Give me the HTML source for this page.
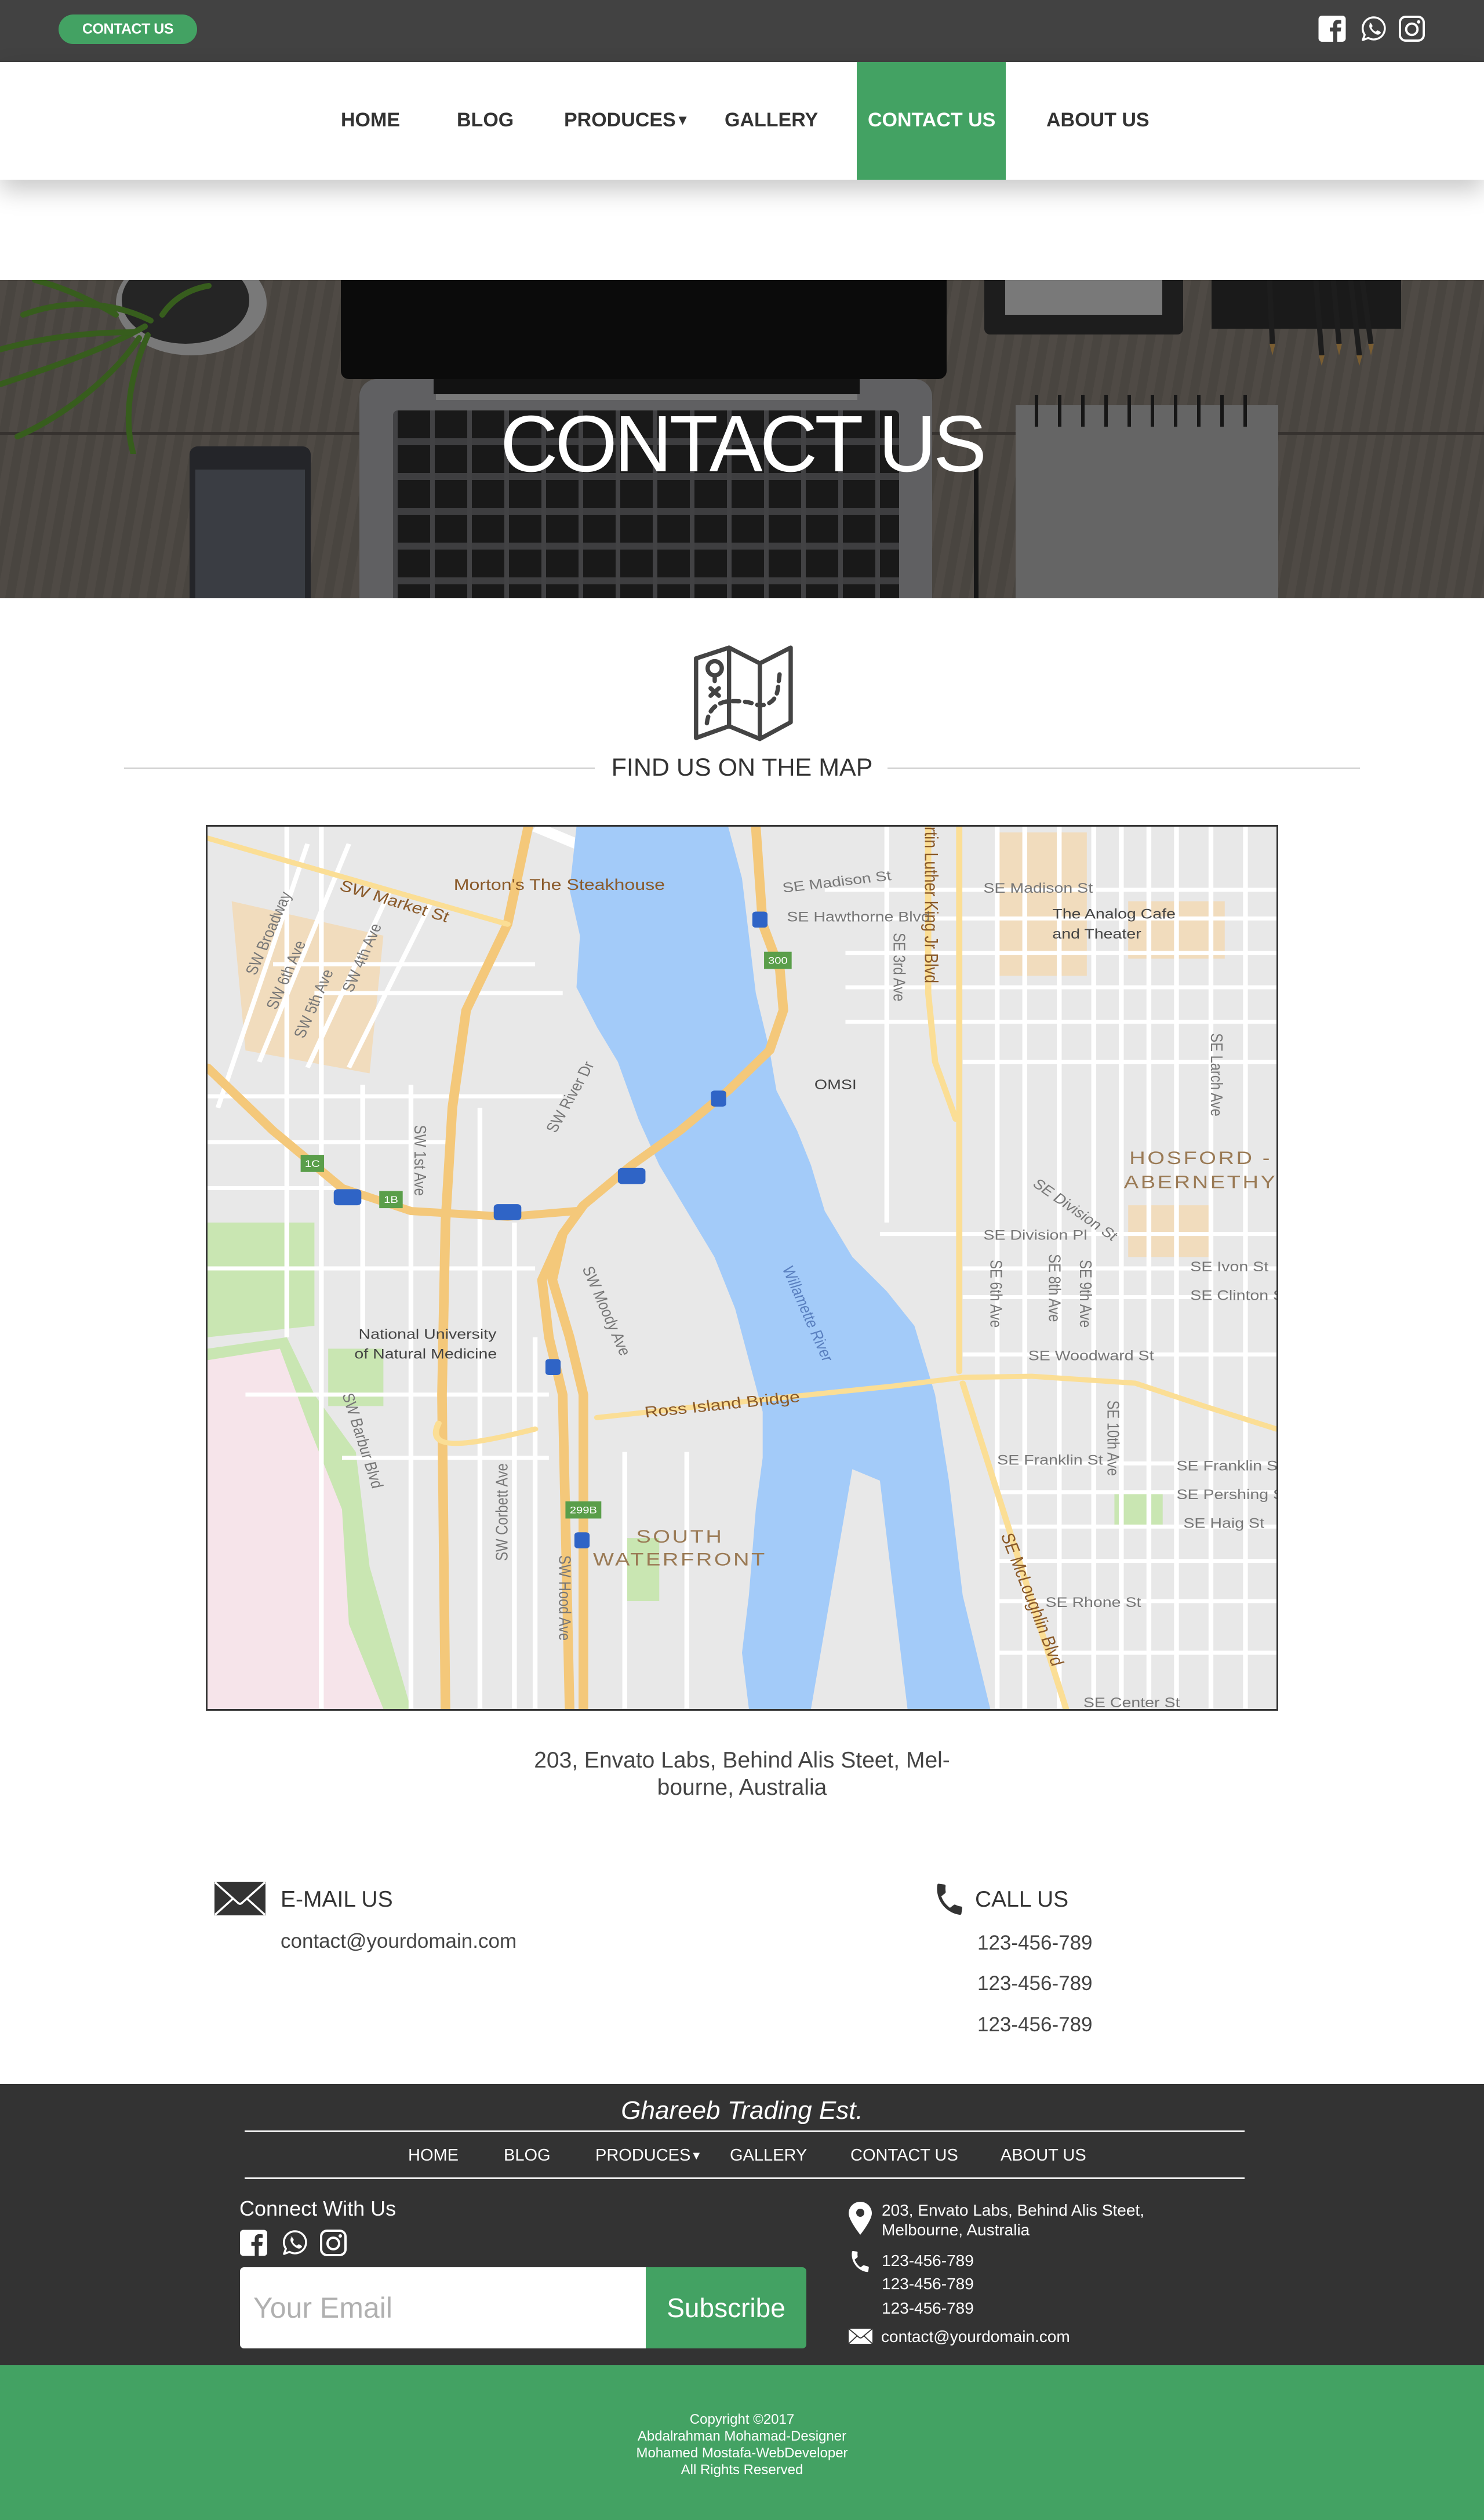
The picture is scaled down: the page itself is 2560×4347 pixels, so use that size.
<!DOCTYPE html>
<html><head><meta charset="utf-8">
<style>
*{margin:0;padding:0;box-sizing:border-box}
html,body{width:2560px;height:4347px;background:#fff;overflow:hidden;font-family:"Liberation Sans",sans-serif;color:#333}
.a{position:absolute;white-space:nowrap}
</style></head><body>

<!-- top bar -->
<div class="a" style="left:0;top:0;width:2560px;height:107px;background:#424242"></div>
<div class="a" style="left:101px;top:25px;width:239px;height:51px;border-radius:26px;background:#43a263;color:#fff;font-size:25px;font-weight:bold;line-height:51px;text-align:center;letter-spacing:-0.5px">CONTACT US</div>
<svg class="a" style="left:2274px;top:27px" width="48" height="45" viewBox="0 0 48 46"><rect width="48" height="46" rx="6" fill="#fff"/><path d="M33 46V28h6l1-7h-7v-4c0-2 1-3 3-3h4V8c-2-.4-4-.5-6-.5-5.5 0-8 3.5-8 8.5v5h-6v7h6v18z" fill="#424242"/></svg>
<svg class="a" style="left:2347px;top:27px" width="46" height="46" viewBox="0 0 46 46"><path d="M23 3a19 19 0 1 1-9.5 35.5L4 42l3.2-9A19 19 0 0 1 23 3z" fill="none" stroke="#fff" stroke-width="3.5" stroke-linejoin="round"/><path d="M15 13c1-1 2-1 3 0l2.5 4c.5 1 0 2-1 2.7-.5.4-.5 1 0 2 1.5 2.5 3 4 5.5 5.5 1 .5 1.6.5 2-0l1-1c.7-.8 1.700-1 2.6-.5l3.6 2.3c1 .7 1 1.7 0 2.8-2 2.2-4.5 2.5-7.3 1.3-5-2.2-9-6.3-11.2-11.2-1-2.5-.8-5.8 1.3-7.4z" fill="#fff"/></svg>
<svg class="a" style="left:2413px;top:27px" width="45" height="45" viewBox="0 0 46 46"><rect x="2" y="2" width="42" height="42" rx="10" fill="none" stroke="#fff" stroke-width="4"/><circle cx="23" cy="24" r="10" fill="none" stroke="#fff" stroke-width="4"/><circle cx="35" cy="11" r="3" fill="#fff"/></svg>

<!-- nav -->
<div class="a" style="left:0;top:107px;width:2560px;height:203px;background:#fff;box-shadow:0 18px 40px rgba(0,0,0,.22)"></div>
<div class="a" style="left:1478px;top:107px;width:257px;height:203px;background:#43a263"></div>
<div class="a" style="left:0;top:185px;width:2560px;height:44px;font-size:34px;font-weight:bold;line-height:44px;color:#333">
 <span class="a" style="left:588px">HOME</span>
 <span class="a" style="left:788px">BLOG</span>
 <span class="a" style="left:973px">PRODUCES<span style="font-size:24px;position:relative;top:-3px">▼</span></span>
 <span class="a" style="left:1250px">GALLERY</span>
 <span class="a" style="left:1497px;color:#fff">CONTACT US</span>
 <span class="a" style="left:1805px">ABOUT US</span>
</div>

<!-- hero -->
<div class="a" style="left:0;top:483px;width:2560px;height:549px;overflow:hidden;background:repeating-linear-gradient(100deg,#5a554f 0 14px,#544f49 14px 30px)">
 <div class="a" style="left:0;top:262px;width:2560px;height:5px;background:#3e3a36"></div>
 <svg class="a" style="left:0;top:0" width="560" height="300" viewBox="0 0 560 300"><ellipse cx="330" cy="40" rx="130" ry="90" fill="#8a8a8a"/><ellipse cx="320" cy="35" rx="110" ry="75" fill="#2b2b2b"/><g stroke="#3f6a22" stroke-width="10" fill="none" stroke-linecap="round"><path d="M250 80 C180 120 90 150 0 180"/><path d="M260 70 C200 40 120 30 40 60"/><path d="M240 100 C200 160 120 230 30 270"/><path d="M280 60 C300 30 330 15 360 10"/><path d="M230 90 C150 90 70 100 0 120"/><path d="M255 95 C230 150 210 230 230 300"/><path d="M200 60 C150 30 100 10 60 0"/></g></svg>
 <div class="a" style="left:588px;top:0;width:1045px;height:171px;background:#0d0d0d;border-radius:0 0 14px 14px"></div>
 <div class="a" style="left:620px;top:171px;width:988px;height:400px;background:#6e6e70;border-radius:30px 30px 0 0"></div>
 <div class="a" style="left:748px;top:171px;width:735px;height:26px;background:#151515"></div>
 <div class="a" style="left:752px;top:197px;width:727px;height:10px;background:#8a8a8a"></div>
 <div class="a" style="left:678px;top:225px;width:873px;height:340px;background:#4c4c4e;border-radius:8px;
   background-image:repeating-linear-gradient(90deg,transparent 0 8px,#1c1c1d 8px 64px),repeating-linear-gradient(0deg,#4c4c4e 0 10px,transparent 10px 60px)"></div>
 <div class="a" style="left:678px;top:225px;width:873px;height:340px;background:repeating-linear-gradient(180deg,#1d1d1e 0 48px,#4c4c4e 48px 60px);mix-blend-mode:lighten;opacity:.9"></div>
 <div class="a" style="left:327px;top:287px;width:209px;height:300px;background:#2a2b2f;border-radius:14px"></div>
 <div class="a" style="left:337px;top:327px;width:189px;height:260px;background:#43464d"></div>
 <div class="a" style="left:1752px;top:216px;width:453px;height:340px;background:#747474"></div>
 <div class="a" style="left:1785px;top:198px;width:390px;height:55px;background:repeating-linear-gradient(90deg,#1a1a1a 0 6px,transparent 6px 40px)"></div>
 <div class="a" style="left:1680px;top:310px;width:8px;height:240px;background:#1a1a1a"></div>
 <div class="a" style="left:1698px;top:0;width:343px;height:94px;background:#222;border-radius:0 0 10px 10px"></div>
 <div class="a" style="left:1734px;top:0;width:271px;height:60px;background:#8a8a8a"></div>
 <div class="a" style="left:2090px;top:0;width:327px;height:84px;background:#1e1e1e"></div>
 <svg class="a" style="left:2150px;top:0" width="300" height="150" viewBox="0 0 300 150"><g stroke="#222" stroke-width="9"><path d="M40 0 L45 110"/><path d="M120 0 L130 130"/><path d="M150 0 L160 110"/><path d="M180 0 L195 130"/><path d="M200 0 L215 110"/></g><g fill="#8a6a3a"><path d="M40 110 l5 20 5-20z"/><path d="M125 130 l5 18 5-18z"/><path d="M155 110 l5 20 5-20z"/><path d="M190 130 l5 18 5-18z"/><path d="M210 110 l5 20 5-20z"/></g></svg>
 <div class="a" style="left:0;top:0;width:2560px;height:549px;background:rgba(0,0,0,.12)"></div>
 <div class="a" style="left:0;top:213px;width:2560px;text-align:center;font-size:138px;line-height:140px;color:#fff;letter-spacing:-5px">CONTACT US</div>
</div>

<!-- map icon -->
<svg class="a" style="left:1150px;top:1090px" width="260" height="200" viewBox="0 0 768 590"><g fill="none" stroke="#444" stroke-width="22" stroke-linejoin="round" stroke-linecap="round"><path d="M150 135 L318 80 L475 160 L632 80 L632 460 L475 545 L318 480 L150 540 Z"/><path d="M318 80 L318 480 M475 160 L475 545"/><circle cx="245" cy="185" r="36"/><path d="M245 225 L245 250 M224 287 L266 325 M266 287 L224 325"/><path d="M205 465 Q215 375 300 355 Q400 345 470 375 Q560 372 568 280 L578 195" stroke-dasharray="34 30"/></g></svg>
<div class="a" style="left:214px;top:1324px;width:812px;height:2px;background:#ccc"></div>
<div class="a" style="left:1531px;top:1324px;width:815px;height:2px;background:#ccc"></div>
<div class="a" style="left:1030px;top:1299px;width:500px;text-align:center;font-size:43px;line-height:50px;color:#333">FIND US ON THE MAP</div>

<!-- map -->
<svg class="a" style="left:355px;top:1423px;border:3px solid #333" width="1850" height="1528" viewBox="5 10 1550 1538" preserveAspectRatio="none" font-family="Liberation Sans, sans-serif">
<rect x="0" y="0" width="1600" height="1600" fill="#e8e8e8"/>
<path d="M5 920 L120 900 L160 1000 L220 1100 L240 1300 L300 1548 L5 1548Z" fill="#c9e6b2"/>
<path d="M5 940 L110 920 L150 1050 L200 1200 L210 1400 L260 1548 L5 1548Z" fill="#f6e4ea"/>
<path d="M5 700 L160 700 L160 880 L5 900Z" fill="#c9e6b2"/>
<path d="M180 920 L260 920 L260 1020 L180 1020Z" fill="#c9e6b2"/>
<path d="M1320 1170 L1390 1170 L1390 1230 L1320 1230Z" fill="#c9e6b2"/>
<path d="M610 1250 L660 1250 L660 1360 L610 1360Z" fill="#c9e6b2"/>
<path d="M40 140 L260 200 L240 440 L60 400Z" fill="#f1dcbd"/>
<path d="M1150 20 L1280 20 L1280 270 L1150 270Z M1340 140 L1480 140 L1480 240 L1340 240Z M1340 670 L1460 670 L1460 760 L1340 760Z" fill="#f1dcbd"/>
<g stroke="#fff" stroke-width="7" fill="none">
<path d="M900 120H1555 M900 170H1555 M930 230H1555 M930 290H1555 M930 350H1555 M1100 420H1555 M980 720H1555 M1100 780H1555 M1100 830H1555 M1100 930H1555 M1150 1120H1555 M1150 1170H1555 M1150 1230H1555 M1150 1290H1555 M1150 1360H1555 M1150 1450H1555"/>
<path d="M1150 10V1548 M1190 10V1548 M1240 10V1548 M1290 10V1548 M1330 10V1548 M1370 10V1548 M1410 10V1548 M1460 10V1548 M1510 10V1548 M990 10V700"/>
<path d="M5 560H360 M5 640H200 M5 780H480 M60 1000H500 M200 1110H500 M5 480H520 M160 300H520 M100 250H480"/>
<path d="M120 10V900 M170 10V1548 M230 460V900 M300 460V1548 M400 500V1548 M450 700V1548 M480 900V1548 M610 1100V1548 M700 1100V1548"/>
<path d="M20 500 L150 40 M80 420 L210 40 M150 430 L270 120 M210 430 L330 140"/>
<path d="M480 10 L780 160" stroke-width="18"/>
</g>
<path d="M540 10 L760 10 L780 100 L790 200 L800 300 L820 400 L830 470 L860 540 L880 600 L900 680 L940 760 L990 820 L1030 880 L1060 1000 L1080 1150 L1100 1350 L1140 1548 L1020 1548 L1000 1350 L980 1150 L940 1130 L880 1548 L790 1548 L780 1450 L790 1350 L800 1200 L810 1110 L810 1030 L790 940 L770 850 L740 760 L700 680 L660 600 L630 520 L600 420 L570 360 L540 290 L545 200 L530 120 Z" fill="#a3cbf9"/>
<g fill="none" stroke-linecap="round" stroke-linejoin="round">
<g stroke="#f4c87a" stroke-width="14">
<path d="M800 10 L810 180 L835 260 L840 330 L820 400 L760 470 L690 540 L620 600 L550 670 L520 720 L505 800 L530 900 L550 1000 L550 1548"/>
<path d="M5 430 L100 540 L200 640 L300 680 L440 690 L540 680"/>
<path d="M520 720 L490 800 L500 900 L520 1000 L530 1548"/>
<path d="M470 10 L440 180 L380 330 L360 500 L350 700 L345 1000 L350 1548"/>
</g>
<g stroke="#fbde95" stroke-width="9">
<path d="M570 1040 L800 1010 L1000 985 L1100 970 L1200 968 L1350 980 L1450 1020 L1555 1060"/>
<path d="M1095 10 V960 M1100 980 L1250 1548"/>
<path d="M1050 10 V300 L1060 420 L1090 520"/>
<path d="M5 30 L440 180 M340 1050 C320 1100 380 1090 480 1060"/>
</g>
</g>
<g fill="#5a9e4a"><rect x="140" y="582" width="34" height="30"/><rect x="254" y="645" width="34" height="30"/><rect x="812" y="228" width="40" height="30"/><rect x="524" y="1186" width="52" height="30"/></g>
<g fill="#fff" font-size="17" text-anchor="middle"><text x="157" y="603">1C</text><text x="271" y="666">1B</text><text x="832" y="249">300</text><text x="550" y="1207">299B</text></g>
<g fill="#2f64c6"><rect x="188" y="642" width="40" height="28" rx="6"/><rect x="420" y="668" width="40" height="28" rx="6"/><rect x="600" y="605" width="40" height="28" rx="6"/><rect x="795" y="158" width="22" height="28" rx="5"/><rect x="735" y="470" width="22" height="28" rx="5"/><rect x="495" y="938" width="22" height="28" rx="5"/><rect x="537" y="1240" width="22" height="28" rx="5"/></g>
<g fill="#777" font-size="24">
<text x="845" y="175">SE Hawthorne Blvd</text>
<text x="840" y="125" transform="rotate(-8 840 125)">SE Madison St</text>
<text x="1130" y="125">SE Madison St</text>
<text x="1130" y="730">SE Division Pl</text>
<text x="1430" y="785">SE Ivon St</text>
<text x="1430" y="835">SE Clinton St</text>
<text x="1195" y="940">SE Woodward St</text>
<text x="1150" y="1122">SE Franklin St</text>
<text x="1410" y="1132">SE Franklin St</text>
<text x="1410" y="1182">SE Pershing St</text>
<text x="1420" y="1232">SE Haig St</text>
<text x="1220" y="1370">SE Rhone St</text>
<text x="1275" y="1545">SE Center St</text>
<text x="224" y="903" fill="#444">National University</text>
<text x="218" y="937" fill="#444">of Natural Medicine</text>
<text x="885" y="468" fill="#444">OMSI</text>
<text x="1230" y="170" fill="#444">The Analog Cafe</text>
<text x="1230" y="205" fill="#444">and Theater</text>
<text x="1140" y="765" transform="rotate(90 1140 765)">SE 6th Ave</text>
<text x="1225" y="755" transform="rotate(90 1225 755)">SE 8th Ave</text>
<text x="1270" y="765" transform="rotate(90 1270 765)">SE 9th Ave</text>
<text x="1310" y="1010" transform="rotate(90 1310 1010)">SE 10th Ave</text>
<text x="1000" y="195" transform="rotate(90 1000 195)">SE 3rd Ave</text>
<text x="305" y="530" transform="rotate(90 305 530)">SW 1st Ave</text>
<text x="548" y="780" transform="rotate(70 548 780)">SW Moody Ave</text>
<text x="510" y="545" transform="rotate(-65 510 545)">SW River Dr</text>
<text x="515" y="1280" transform="rotate(90 515 1280)">SW Hood Ave</text>
<text x="440" y="1290" transform="rotate(-90 440 1290)">SW Corbett Ave</text>
<text x="200" y="1000" transform="rotate(75 200 1000)">SW Barbur Blvd</text>
<text x="75" y="270" transform="rotate(-70 75 270)">SW Broadway</text>
<text x="105" y="330" transform="rotate(-70 105 330)">SW 6th Ave</text>
<text x="145" y="380" transform="rotate(-70 145 380)">SW 5th Ave</text>
<text x="215" y="300" transform="rotate(-70 215 300)">SW 4th Ave</text>
<text x="1200" y="635" transform="rotate(40 1200 635)">SE Division St</text>
<text x="1460" y="370" transform="rotate(90 1460 370)">SE Larch Ave</text>
<text x="838" y="780" transform="rotate(70 838 780)" fill="#5a80c0">Willamette River</text>
</g>
<g fill="#8a5a2a" font-size="27">
<text x="362" y="120">Morton's The Steakhouse</text>
<text x="195" y="120" transform="rotate(20 195 120)">SW Market St</text>
<text x="640" y="1040" transform="rotate(-7 640 1040)">Ross Island Bridge</text>
<text x="1045" y="10" transform="rotate(90 1045 10)">rtin Luther King Jr Blvd</text>
<text x="1155" y="1245" transform="rotate(72 1155 1245)">SE McLoughlin Blvd</text>
</g>
<g fill="#9a7a55" font-size="32" letter-spacing="3" text-anchor="middle"><text x="1445" y="598">HOSFORD -</text><text x="1445" y="640">ABERNETHY</text><text x="690" y="1258">SOUTH</text><text x="690" y="1298">WATERFRONT</text></g>
</svg>

<!-- address -->
<div class="a" style="left:0;top:3013px;width:2560px;text-align:center;font-size:39px;line-height:47px;color:#444">203, Envato Labs, Behind Alis Steet, Mel-<br>bourne, Australia</div>

<!-- email / call -->
<svg class="a" style="left:370px;top:3246px" width="88" height="58" viewBox="0 0 88 58"><rect width="88" height="58" fill="#333"/><path d="M1 1 L40 36 Q44 40 48 36 L87 1 M1 57 L32 29 M87 57 L56 29" stroke="#fff" stroke-width="3.5" fill="none"/></svg>
<div class="a" style="left:484px;top:3254px;font-size:39px;line-height:46px;color:#333">E-MAIL US</div>
<div class="a" style="left:484px;top:3328px;font-size:35px;line-height:42px;color:#444">contact@yourdomain.com</div>
<svg class="a" style="left:1605px;top:3245px" width="66" height="62" viewBox="0 0 24 24"><path d="M6.3 10.9c1.5 2.9 3.9 5.3 6.8 6.8l2.3-2.3c.3-.3.7-.4 1.1-.2 1.1.4 2.4.6 3.7.6.6 0 1 .4 1 1v3.6c0 .6-.4 1-1 1C10.5 21.4 2.6 13.5 2.6 3.8c0-.6.4-1 1-1h3.6c.6 0 1 .4 1 1 0 1.3.2 2.5.6 3.7.1.4 0 .8-.3 1.1z" fill="#333" transform="rotate(8 12 12)"/></svg>
<div class="a" style="left:1682px;top:3254px;font-size:39px;line-height:46px;color:#333">CALL US</div>
<div class="a" style="left:1686px;top:3331px;font-size:35px;line-height:42px;color:#444">123-456-789</div>
<div class="a" style="left:1686px;top:3401px;font-size:35px;line-height:42px;color:#444">123-456-789</div>
<div class="a" style="left:1686px;top:3472px;font-size:35px;line-height:42px;color:#444">123-456-789</div>

<!-- footer -->
<div class="a" style="left:0;top:3595px;width:2560px;height:485px;background:#333"></div>
<div class="a" style="left:0;top:3614px;width:2560px;text-align:center;font-size:44px;line-height:54px;font-style:italic;color:#fff">Ghareeb Trading Est.</div>
<div class="a" style="left:422px;top:3675px;width:1725px;height:3px;background:#eee"></div>
<div class="a" style="left:0;top:3700px;width:2560px;height:36px;font-size:29px;line-height:36px;color:#fff">
 <span class="a" style="left:704px">HOME</span>
 <span class="a" style="left:869px">BLOG</span>
 <span class="a" style="left:1027px">PRODUCES<span style="font-size:20px;position:relative;top:-2px">▼</span></span>
 <span class="a" style="left:1259px">GALLERY</span>
 <span class="a" style="left:1467px">CONTACT US</span>
 <span class="a" style="left:1726px">ABOUT US</span>
</div>
<div class="a" style="left:422px;top:3756px;width:1725px;height:3px;background:#eee"></div>
<div class="a" style="left:413px;top:3789px;font-size:36px;line-height:42px;color:#fff">Connect With Us</div>
<svg class="a" style="left:414px;top:3846px" width="47" height="46" viewBox="0 0 48 46"><rect width="48" height="46" rx="6" fill="#fff"/><path d="M33 46V28h6l1-7h-7v-4c0-2 1-3 3-3h4V8c-2-.4-4-.5-6-.5-5.5 0-8 3.5-8 8.5v5h-6v7h6v18z" fill="#333"/></svg>
<svg class="a" style="left:486px;top:3846px" width="46" height="46" viewBox="0 0 46 46"><path d="M23 3a19 19 0 1 1-9.5 35.5L4 42l3.2-9A19 19 0 0 1 23 3z" fill="none" stroke="#fff" stroke-width="3.5" stroke-linejoin="round"/><path d="M15 13c1-1 2-1 3 0l2.5 4c.5 1 0 2-1 2.7-.5.4-.5 1 0 2 1.5 2.5 3 4 5.5 5.5 1 .5 1.6.5 2-0l1-1c.7-.8 1.7-1 2.6-.5l3.6 2.3c1 .7 1 1.7 0 2.8-2 2.2-4.5 2.5-7.3 1.3-5-2.2-9-6.3-11.2-11.2-1-2.5-.8-5.8 1.3-7.4z" fill="#fff"/></svg>
<svg class="a" style="left:552px;top:3846px" width="46" height="46" viewBox="0 0 46 46"><rect x="2" y="2" width="42" height="42" rx="10" fill="none" stroke="#fff" stroke-width="4"/><circle cx="23" cy="24" r="10" fill="none" stroke="#fff" stroke-width="4"/><circle cx="35" cy="11" r="3" fill="#fff"/></svg>
<div class="a" style="left:414px;top:3911px;width:700px;height:140px;background:#fff;border-radius:7px 0 0 7px"></div>
<div class="a" style="left:437px;top:3951px;font-size:50px;line-height:60px;color:#b0b0b0">Your Email</div>
<div class="a" style="left:1114px;top:3911px;width:277px;height:140px;background:#43a263;border-radius:0 7px 7px 0;color:#fff;font-size:46px;line-height:140px;text-align:center">Subscribe</div>

<svg class="a" style="left:1464px;top:3798px" width="40" height="57" viewBox="0 0 40 57"><path d="M20 0C9 0 0 9 0 20c0 12 20 37 20 37s20-25 20-37C40 9 31 0 20 0z" fill="#fff"/><circle cx="20" cy="19" r="7" fill="#333"/></svg>
<div class="a" style="left:1521px;top:3796px;font-size:28px;line-height:34px;color:#fff">203, Envato Labs, Behind Alis Steet,<br>Melbourne, Australia</div>
<svg class="a" style="left:1462px;top:3880px" width="44" height="42" viewBox="0 0 24 24"><path d="M6.3 10.9c1.5 2.9 3.9 5.3 6.8 6.8l2.3-2.3c.3-.3.7-.4 1.1-.2 1.1.4 2.4.6 3.7.6.6 0 1 .4 1 1v3.6c0 .6-.4 1-1 1C10.5 21.4 2.6 13.5 2.6 3.8c0-.6.4-1 1-1h3.6c.6 0 1 .4 1 1 0 1.3.2 2.5.6 3.7.1.4 0 .8-.3 1.1z" fill="#fff" transform="rotate(8 12 12)"/></svg>
<div class="a" style="left:1521px;top:3883px;font-size:28px;line-height:34px;color:#fff">123-456-789</div>
<div class="a" style="left:1521px;top:3923px;font-size:28px;line-height:34px;color:#fff">123-456-789</div>
<div class="a" style="left:1521px;top:3965px;font-size:28px;line-height:34px;color:#fff">123-456-789</div>
<svg class="a" style="left:1464px;top:4017px" width="41" height="26" viewBox="0 0 41 26"><rect width="41" height="26" fill="#fff"/><path d="M0 0 L18 15 Q20.5 17 23 15 L41 0 M0 26 L15 12 M41 26 L26 12" stroke="#333" stroke-width="1.8" fill="none"/></svg>
<div class="a" style="left:1520px;top:4014px;font-size:28px;line-height:34px;color:#fff">contact@yourdomain.com</div>

<div class="a" style="left:0;top:4080px;width:2560px;height:267px;background:#43a263"></div>
<div class="a" style="left:0;top:4159px;width:2560px;text-align:center;font-size:24px;line-height:29px;color:#fff">Copyright ©2017<br>Abdalrahman Mohamad-Designer<br>Mohamed Mostafa-WebDeveloper<br>All Rights Reserved</div>
</body></html>
